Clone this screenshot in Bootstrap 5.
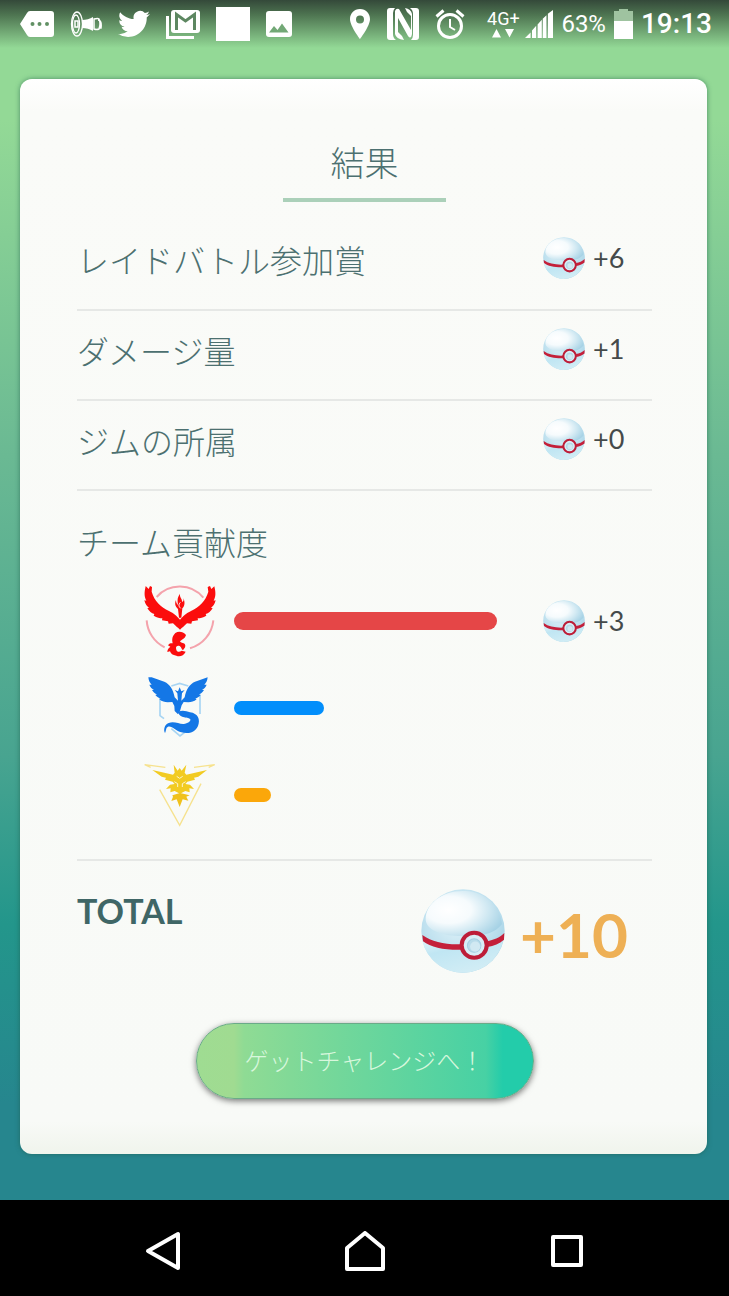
<!DOCTYPE html>
<html lang="ja">
  <head>
    <meta charset="UTF-8" />
    <meta name="viewport" content="width=device-width, initial-scale=1.0" />
    <title>結果</title>
    <link
      rel="stylesheet"
      href="https://cdn.jsdelivr.net/npm/bootstrap@5.3.3/dist/css/bootstrap.min.css"
    />
    <style>
      body {
        font-family: Lato, "Noto Sans CJK JP", sans-serif;
        background: #000;
        color: #4c7070;
      }
      .screen {
        background: linear-gradient(#93d996 10%, #6ab993 38%, #48a490 63%, #23968b 77%, #26868e 92%);
      }
      .status-bar {
        height: 48px;
        padding: 0 17px 0 20px;
        font-family: Roboto, sans-serif;
        background: linear-gradient(#34493a, #4d7350 30%, #93d99600);
      }
      .status-left {
        gap: 16px;
      }
      .network {
        width: 36px;
        font-size: 18px;
        line-height: 18px;
      }
      .battery-text {
        font-size: 24px;
        line-height: 32px;
      }
      .clock {
        font-size: 28px;
        line-height: 32px;
      }
      .result-card {
        margin: 31px 22px 46px 20px;
        padding: 64px 55px 55px 57px;
        border: 0;
        border-radius: 12px;
        color: inherit;
        background: linear-gradient(#fff, #fafbf8 3%, #f8faf7 97%, #f0f4ec);
        box-shadow: 0 0 5px #1e5a4a99;
      }
      .result-title {
        width: 163px;
        height: 59px;
        font-size: 34px;
        line-height: 40px;
        font-weight: 300;
        border-bottom: 4px solid #abd0b9;
      }
      .result-row {
        height: 90px;
        border-bottom: 2px solid #e6e8e6;
        padding-bottom: 6px;
      }
      .first-row {
        height: 109px;
        padding-top: 16px;
      }
      .row-label {
        font-size: 32px;
        line-height: 40px;
        font-weight: 300;
      }
      .reward {
        width: 109px;
        gap: 8px;
        font-size: 27px;
        line-height: 32px;
        color: #454a4a;
      }
      .result-row .reward {
        margin-bottom: 6px;
      }
      .teams {
        padding-top: 32px;
        height: 370px;
        border-bottom: 2px solid #e6e8e6;
      }
      .teams-title {
        margin-bottom: 14px;
      }
      .team {
        height: 87px;
        padding-left: 67px;
      }
      .track {
        margin-left: 18px;
      }
      .team-bar {
        height: 14px;
        border-radius: 7px;
      }
      .winner .team-bar {
        height: 18px;
        border-radius: 9px;
      }
      .red { background: #e54647; }
      .blue { background: #028efb; }
      .yellow { background: #fba70a; }
      .total-row {
        padding: 28px 24px 0 0;
      }
      .total-label {
        font-size: 34px;
        line-height: 44px;
        font-weight: 700;
        color: #3f6666;
      }
      .total-reward {
        gap: 15px;
        font-size: 62px;
        line-height: 82px;
        font-weight: 700;
        color: #eeb055;
      }
      .go-btn {
        width: 338px;
        height: 76px;
        margin-top: 48px;
        border: 1px solid #6aab88;
        border-radius: 38px;
        font-size: 24px;
        font-weight: 300;
        color: #d8f7dd;
        background: linear-gradient(90deg, #9fdc92 0, #a0db91 11%, #8fdb94 14%, #47d1a4 86%, #23ccaa 91%);
        box-shadow: 0 2px 6px #0008;
      }
      .go-btn:hover {
        color: #fff;
      }
      .nav-keys {
        height: 97px;
        padding: 5px 144px 0 143px;
      }
      .nav-keys button {
        line-height: 0;
      }
    </style>
  </head>
  <body>
    <!-- shared ball icon -->
    <svg class="position-absolute" width="0" height="0" aria-hidden="true">
      <defs>
        <radialGradient id="ballBase" cx="45%" cy="35%" r="65%">
          <stop offset="0" stop-color="#e6f5fa" />
          <stop offset="65%" stop-color="#bfe1ef" />
          <stop offset="100%" stop-color="#a5d3e6" />
        </radialGradient>
        <radialGradient id="ballShine" cx="30%" cy="42%" r="75%">
          <stop offset="0" stop-color="#fff" />
          <stop offset="40%" stop-color="#f6fbfd" />
          <stop offset="70%" stop-color="#cfe8f2" />
          <stop offset="100%" stop-color="#a6d2e5" />
        </radialGradient>
        <linearGradient id="ballLow" x1="0" y1="0" x2="0.6" y2="1">
          <stop offset="0" stop-color="#e6f6fb" />
          <stop offset="40%" stop-color="#c0e6f3" />
          <stop offset="100%" stop-color="#d2edf5" />
        </linearGradient>
        <symbol id="ball" viewBox="38 28 248 248">
          <circle cx="162" cy="152" r="123" fill="url(#ballBase)" />
          <path d="M52 120C50 70 105 30 170 34c60 2 105 50 107 98-25 30-60 34-90 32-45 8-130-2-135-44z" fill="url(#ballShine)" />
          <path d="M41 178c35 24 80 24 120 20l78-6c18-4 33-12 44-22a123 123 0 0 1-242 8z" fill="url(#ballLow)" />
          <path d="M42 164c30 22 70 29 118 27l2 16c-50 2-94-6-118-25zM233 182c20-3 36-10 51-24l-1 20c-14 12-29 18-49 21z" fill="#c4203a" />
          <circle cx="195" cy="194" r="37" fill="#d8eef6" stroke="#bd1d38" stroke-width="12" />
          <circle cx="195" cy="195" r="20" fill="#b9dcea" stroke="#a5cfe2" stroke-width="3" />
          <circle cx="198" cy="198" r="15" fill="#d1e9f2" />
        </symbol>
      </defs>
    </svg>

    <div class="d-flex flex-column min-vh-100">
      <div class="screen d-flex flex-column flex-grow-1">
        <header class="status-bar d-flex justify-content-between align-items-center text-white">
          <div class="status-left d-flex align-items-center">
            <svg width="34" height="26" viewBox="0 0 34 26" fill="#fff">
              <path fill-rule="evenodd" d="M10 0h21q3 0 3 3v20q0 3-3 3H10q-2 0-3-2L0 13 7 2q1-2 3-2zM12.500 11a2 2 0 1 0 0 4 2 2 0 0 0 0-4zm7 0a2 2 0 1 0 0 4 2 2 0 0 0 0-4zm7.500 0a2 2 0 1 0 0 4 2 2 0 0 0 0-4z" />
            </svg>
            <svg width="32" height="26" viewBox="0 0 32 26" fill="none" stroke="#fff" stroke-width="1.300">
              <ellipse cx="7" cy="13" rx="5.500" ry="12" />
              <ellipse cx="6" cy="13" rx="3.500" ry="9" />
              <path d="M5 10h3v6H5z" stroke-width="1.500" />
              <path d="M12 9c4 0 8-1 11-3v14c-3-2-7-3-11-3q1-4 0-8z" fill="#fff" stroke="none" />
              <path d="M24 8q4-1 5 0 2 5 0 10-2 1-5 0zM28 9q4 0 3 8h-2" stroke-width="1.500" />
            </svg>
            <svg width="32" height="28" viewBox="0 2 24 20" fill="#fff">
              <path d="M23.950 4.570a10 10 0 0 1-2.820.77 4.960 4.960 0 0 0 2.160-2.720c-.95.550-2 .95-3.130 1.180a4.920 4.920 0 0 0-8.380 4.480C7.690 8.100 4.070 6.130 1.640 3.160a4.920 4.920 0 0 0 1.520 6.570 4.900 4.900 0 0 1-2.230-.61v.06a4.920 4.920 0 0 0 3.950 4.830 5 5 0 0 1-2.210.08 4.940 4.940 0 0 0 4.600 3.420A9.870 9.870 0 0 1 0 19.540a13.990 13.990 0 0 0 7.550 2.210c9.050 0 14-7.500 14-13.980 0-.21 0-.42-.02-.63a9.940 9.940 0 0 0 2.460-2.550z" />
            </svg>
            <svg width="34" height="30" viewBox="0 0 34 30">
              <path d="M1.500 7v21.500H28" fill="none" stroke="#fff" stroke-width="3" />
              <rect x="5" y="1" width="29" height="23" rx="3" fill="#fff" />
              <path d="M10.500 21V5.500L19.500 12l9-6.500V21" fill="none" stroke="#5d8761" stroke-width="3" />
            </svg>
            <svg width="34" height="34"><rect width="34" height="34" fill="#fff" /></svg>
            <svg width="26" height="26" viewBox="0 0 26 26">
              <rect width="26" height="26" rx="3" fill="#fff" />
              <path d="M3 21.500l5-6.500 3.500 4 4.500-6.500 6.500 9z" fill="#72a876" />
            </svg>
          </div>
          <div class="d-flex align-items-center">
            <svg class="me-3" width="22" height="30" viewBox="0 0 22 30" fill="#fff">
              <path fill-rule="evenodd" d="M11 0C5 0 1 4.500 1 10.200 1 17 11 30 11 30s10-13 10-19.800C21 4.500 17 0 11 0zm0 6.500a4 4 0 1 1 0 8 4 4 0 0 1 0-8z" />
            </svg>
            <svg class="me-3" width="32" height="32" viewBox="0 0 32 32" fill="#fff">
              <path d="M4 0h7l12 18V9l-5-5-1-4h4q5 1 5 6v22L13 12v12l6 5 1 3h-8q-5-1-5-5V4q0-3 1-4z" fill="none" />
              <path d="M3 0h5q-2 2-2 5v21q0 4 3 6H3q-3 0-3-3V3q0-3 3-3zM29 32h-5q2-2 2-5V6q0-4-3-6h6q3 0 3 3v26q0 3-3 3z" />
              <path d="M8 3q1-3 4-2l12 21V8l-4-4-2-4q6 1 7 6v20q-1 6-4 2L11 10v14l4 4 2 4q-8-1-9-6z" />
            </svg>
            <svg class="me-3" width="30" height="30" viewBox="0 0 30 30" fill="none" stroke="#fff">
              <circle cx="15" cy="17" r="11.500" stroke-width="3" />
              <path d="M1.500 7.500l7-6M28.500 7.500l-7-6" stroke-width="3" />
              <path d="M15 10v8l5 3" stroke-width="2" />
            </svg>
            <div class="network ms-1 text-center">
              4G+
              <svg class="d-block mx-auto" width="22" height="10" viewBox="0 0 22 10" fill="#fff">
                <path d="M0 9.500L4.500 1 9 9.500zM13 1h9l-4.500 8.500z" />
              </svg>
            </div>
            <svg class="ms-1" width="28" height="28" viewBox="0 0 30 30" fill="#fff">
              <path d="M0 30l6-6v6zM7.500 30v-8l4.500-5v13zM13.500 30V15.500l4.500-5V30zM19 30V9.500l4-4V30zM24.500 30V4L30 0v30z" />
            </svg>
            <span class="battery-text ms-2">63%</span>
            <svg class="mx-2" width="19" height="30" viewBox="0 0 19 30">
              <path d="M5 0h9v2h5v11H0V2h5z" fill="#9fc3a0" />
              <path d="M0 12h19v18H0z" fill="#fff" />
            </svg>
            <span class="clock fw-medium">19:13</span>
          </div>
        </header>

        <main class="result-card card flex-grow-1">
          <h1 class="result-title mx-auto mb-0 text-center">結果</h1>

          <div class="result-row first-row d-flex justify-content-between align-items-center">
            <span class="row-label">レイドバトル参加賞</span>
            <div class="reward d-flex align-items-center">
              <svg width="42" height="42"><use href="#ball" /></svg>+6
            </div>
          </div>
          <div class="result-row d-flex justify-content-between align-items-center">
            <span class="row-label">ダメージ量</span>
            <div class="reward d-flex align-items-center">
              <svg width="42" height="42"><use href="#ball" /></svg>+1
            </div>
          </div>
          <div class="result-row d-flex justify-content-between align-items-center">
            <span class="row-label">ジムの所属</span>
            <div class="reward d-flex align-items-center">
              <svg width="42" height="42"><use href="#ball" /></svg>+0
            </div>
          </div>

          <section class="teams">
            <h2 class="row-label teams-title">チーム貢献度</h2>
            <div class="team winner d-flex align-items-center">
              <svg width="72" height="72" viewBox="42 36 216 216" fill="#fb0d0d">
                <path d="M80 72a92 92 0 0 1 140 2M50 142a97 97 0 0 0 54 81M250 142a97 97 0 0 1-70 84" fill="none" stroke="#f4a3ac" stroke-width="6" />
                <path d="M47 39l9 9 4-9 6 3-1 14c8 28 28 47 52 58 15 7 22 14 33 26 11-12 18-19 33-26 24-11 44-30 52-58l-2-14 7-3 4 9 9-8c5 20 4 33-2 43l6-1c-3 12-8 18-14 22l5 2c-6 9-12 15-21 17l2 5c-10 6-18 8-26 8l1 6-18 3-2 7-13-1c-8 8-14 13-21 19-7-6-13-11-21-19l-13 1-2-7-18-3 1-6c-8 0-16-2-26-8l2-5c-9-2-15-8-21-17l5-2c-6-4-11-10-14-22l6 1c-6-10-7-23-2-43z" />
                <path d="M150 62c-2 11 8 16 6 25 6-2 5-6 4-11 6 12 4 24-3 30l-3 28h-7l-3-26c-8-7-11-16-6-27 0 9 3 12 6 15-1-12-4-20 6-34z" />
                <path d="M151 88c-7 8-4 13 1 18" fill="none" stroke="#fff" stroke-width="3" />
                <path d="M136 180c11-7 24-3 32 6-3 12-14 13-18 20 8 5 15 3 16 12 0 7-5 9-7 14-6-4-4-10-10-13-9-3-13 3-10 11 2 8 10 7 16 3l12 3c-6 12-18 17-28 12-11-1-17-6-19-13l-8 2c0-9 5-12 9-16l-7-4c5-7 9-6 14-6-4-15 1-24 8-31z" />
              </svg>
              <div class="track flex-grow-1">
                <div class="team-bar red" style="width: 85%"></div>
              </div>
              <div class="reward d-flex align-items-center">
                <svg width="42" height="42"><use href="#ball" /></svg>+3
              </div>
            </div>
            <div class="team d-flex align-items-center">
              <svg width="72" height="72" viewBox="42 24 216 216" fill="#1477e6">
                <path d="M124 66l25-8 26 8M90 92v63l12 9M124 194l26 22 22-17M210 92v58" fill="none" stroke="#a8d5f3" stroke-width="5" />
                <path d="M65 40l38 13c17 8 26 22 31 47l10 10-2-22-8-10 10 4 5-12 5 12 10-4-8 10-2 22 10-10c5-25 14-39 31-47l38-13c-1 11-5 17-10 22h7c-3 8-8 12-14 15l6 1c-4 7-9 11-15 13l5 2c-5 6-10 9-16 11l4 2c-8 7-16 9-25 9l-14-1-6 10-5 17-6 10-10-10-1-15-6-12-14 1c-9 0-17-2-25-9l4-2c-6-2-11-5-16-11l5-2c-6-2-11-6-15-13l6-1c-6-3-11-7-14-15h7c-5-5-9-11-10-22z" />
                <path d="M144 143c16-6 25-1 36 2 24 3 32 22 24 41-10 22-31 24-50 19-16-4-29-21-40-17-7 3-5 12-9 19-5-9-2-25 11-30 17-6 32 4 45 3 12-1 22-8 20-14-4-9-32 0-37-23z" />
              </svg>
              <div class="track flex-grow-1">
                <div class="team-bar blue" style="width: 29%"></div>
              </div>
              <div class="reward"></div>
            </div>
            <div class="team d-flex align-items-center">
              <svg width="72" height="72" viewBox="42 30 216 216" fill="#f2cb22">
                <path d="M62 55l-18-8 62 8M192 55l62-8-18 8M89 122l60 107 64-125" fill="none" stroke="#f6e28e" stroke-width="4" />
                <path d="M67 63l62 14 5-6-3-24 12 18 6-8 6 8 14-18-5 24 5 6 62-14-26 20-13 3 3 6-23 6-6 7 14 2 12 13-14-2 1 12-13-4-16 8-16-8-13 4 1-12-14 2 12-13 14-2-6-7-23-6 3-6-13-3z" />
                <path d="M127 139l23-7 29 7-10 4 6 12-17-4-9 23-9-23-16 5 5-13z" fill="#f0c11c" />
                <path d="M140 82l9 6 9-6M133 98l10 6v10M167 98l-10 6v10" fill="none" stroke="#fdf5cc" stroke-width="3" />
              </svg>
              <div class="track flex-grow-1">
                <div class="team-bar yellow" style="width: 12%"></div>
              </div>
              <div class="reward"></div>
            </div>
          </section>

          <div class="total-row d-flex justify-content-between">
            <span class="total-label">TOTAL</span>
            <div class="total-reward d-flex">
              <svg width="84" height="84"><use href="#ball" /></svg>
              <span class="pt-1">+10</span>
            </div>
          </div>

          <button type="button" class="go-btn btn mx-auto">ゲットチャレンジへ！</button>
        </main>
      </div>

      <nav class="nav-keys bg-black d-flex justify-content-between align-items-center">
        <button type="button" class="btn p-0 border-0" aria-label="戻る">
          <svg width="38" height="40" viewBox="0 0 38 40" fill="none" stroke="#fff" stroke-width="4" stroke-linejoin="round">
            <path d="M35 3v34L5 20z" />
          </svg>
        </button>
        <button type="button" class="btn p-0 border-0" aria-label="ホーム">
          <svg width="40" height="40" viewBox="0 0 40 40" fill="none" stroke="#fff" stroke-width="4" stroke-linejoin="round">
            <path d="M2 38V17L20 2l18 15v21z" />
          </svg>
        </button>
        <button type="button" class="btn p-0 border-0" aria-label="履歴">
          <svg width="36" height="36" viewBox="0 0 36 36" fill="none" stroke="#fff" stroke-width="4" stroke-linejoin="round">
            <path d="M4 4h28v28H4z" />
          </svg>
        </button>
      </nav>
    </div>
    <script src="https://cdn.jsdelivr.net/npm/bootstrap@5.3.3/dist/js/bootstrap.bundle.min.js"></script>
  </body>
</html>
